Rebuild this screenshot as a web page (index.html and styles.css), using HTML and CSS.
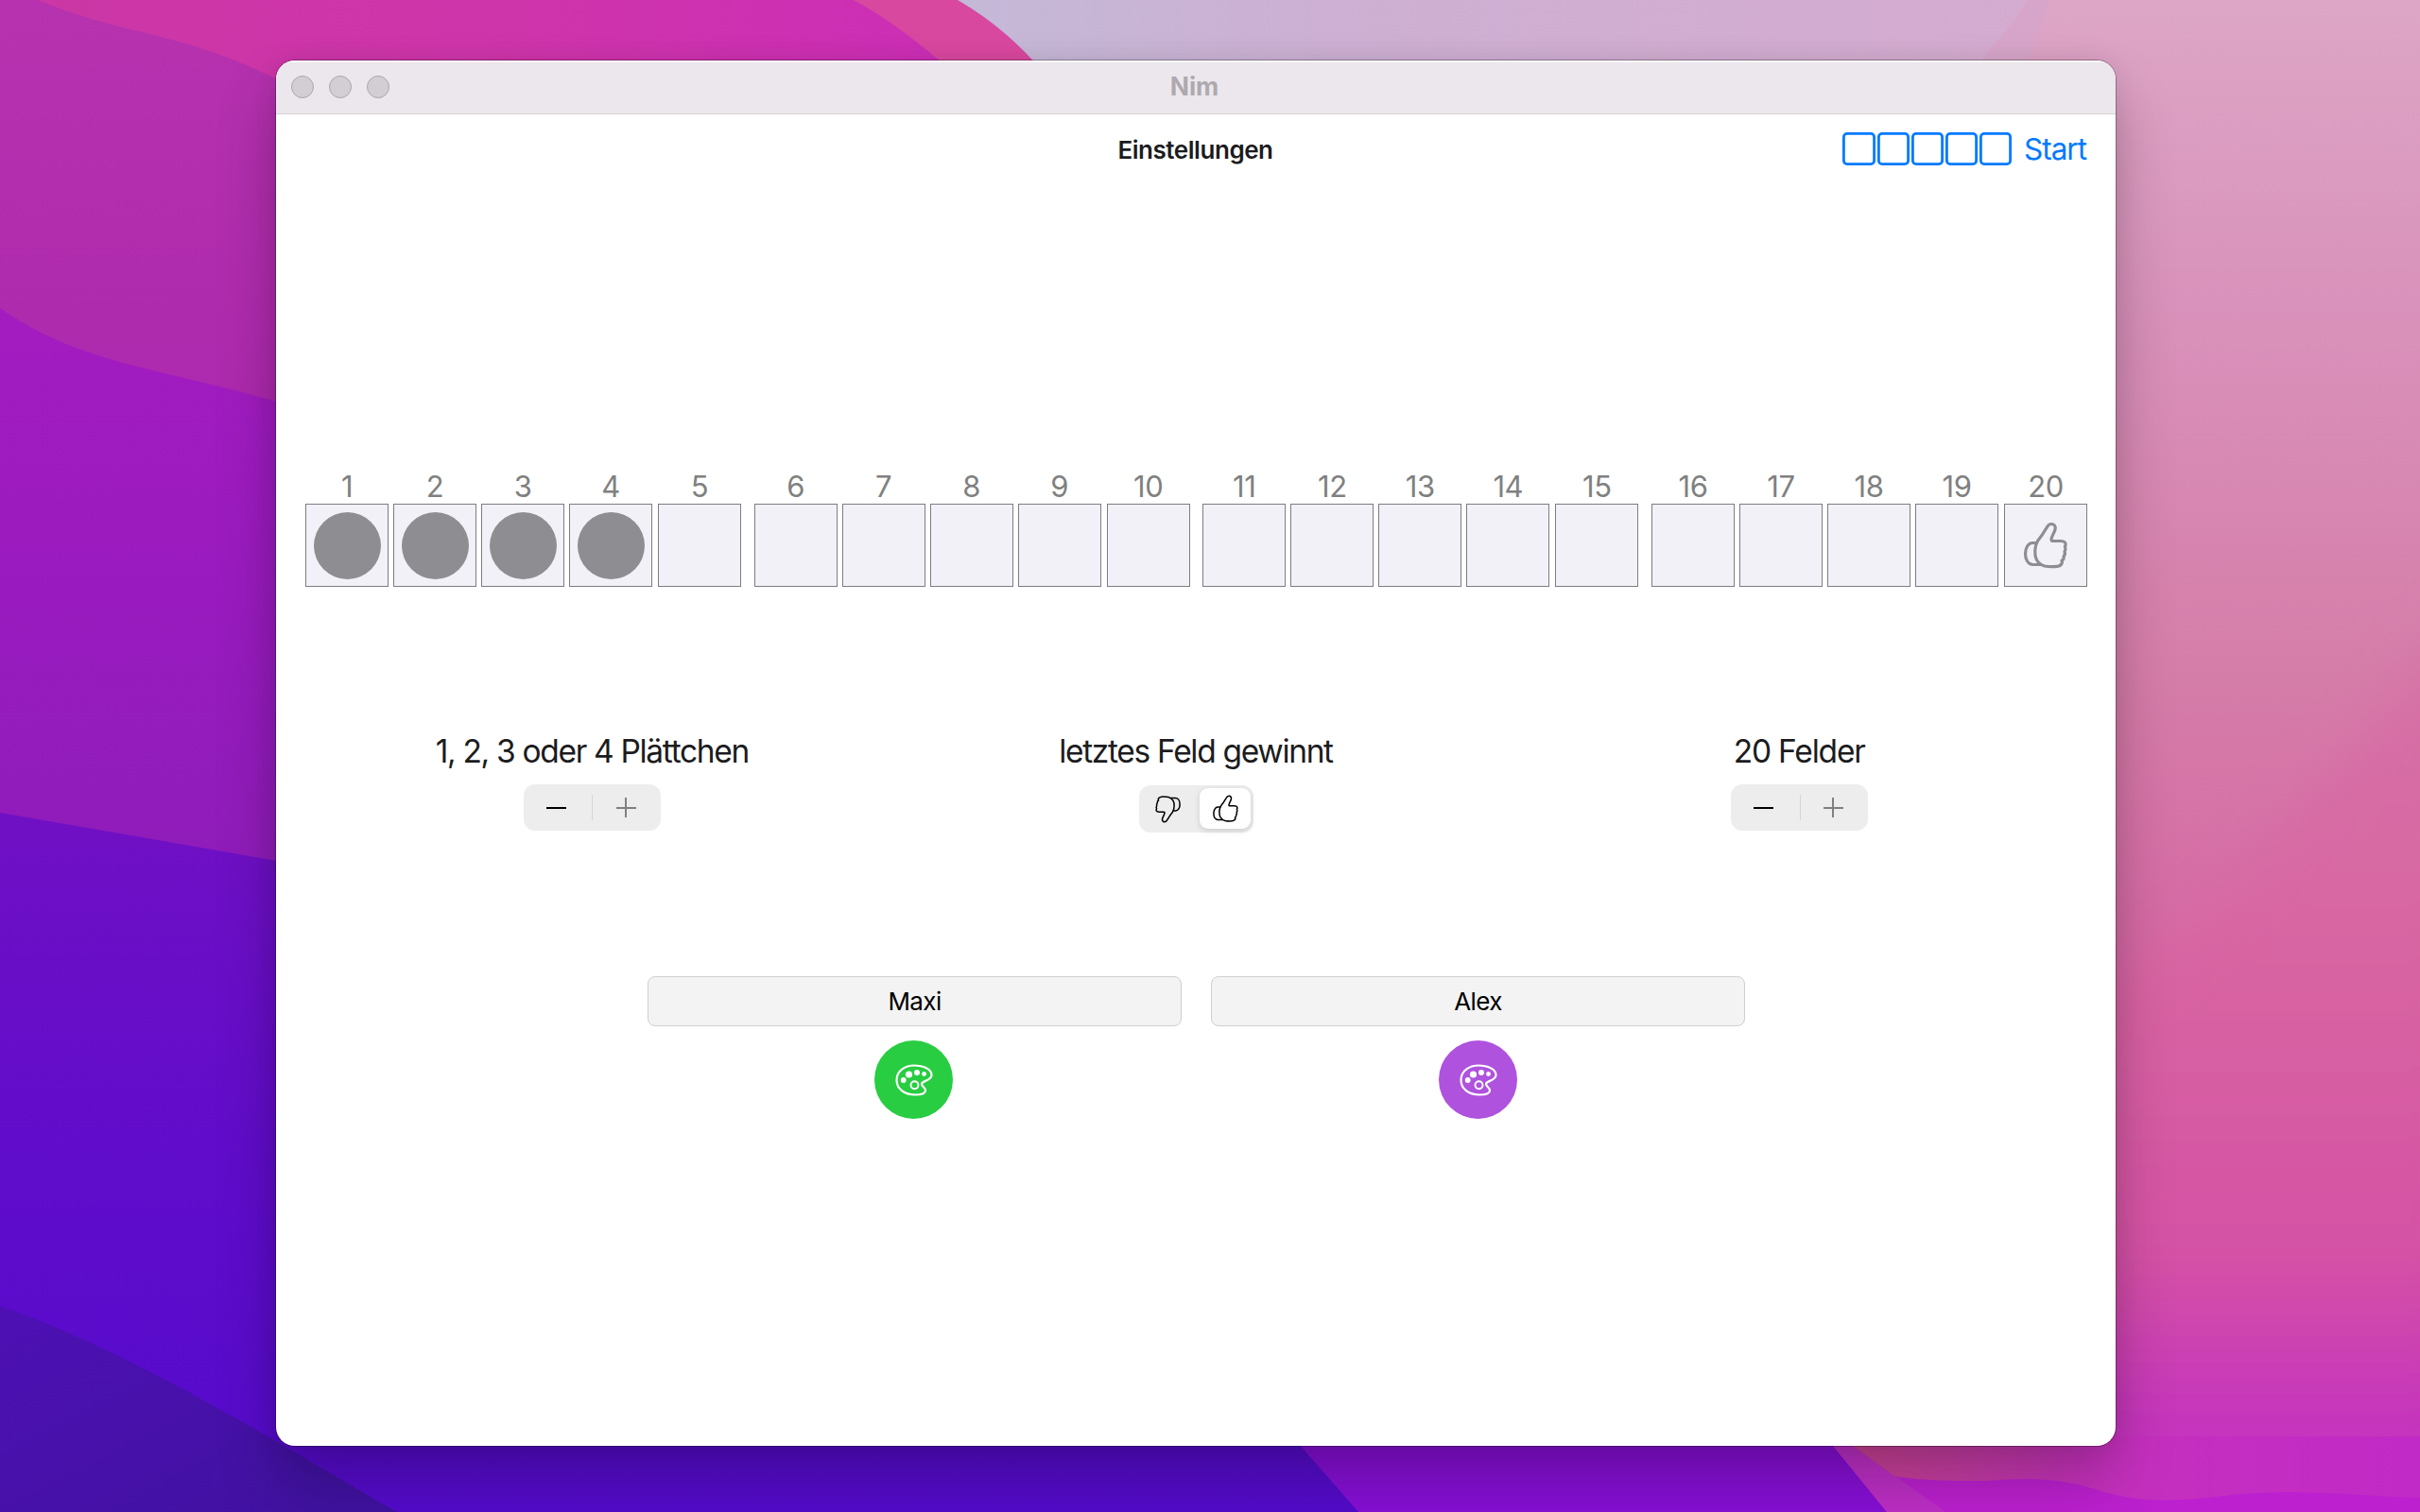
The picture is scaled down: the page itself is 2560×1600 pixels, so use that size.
FILE: index.html
```
<!DOCTYPE html>
<html lang="de">
<head>
<meta charset="utf-8">
<title>Nim</title>
<link rel="stylesheet" href="styles.css">
</head>
<body>
<svg class="wallpaper" viewBox="0 0 2560 1600" preserveAspectRatio="none" aria-hidden="true">
  <defs>
    <linearGradient id="pinkRight" x1="0" y1="0" x2="0" y2="1"><stop offset="0" stop-color="#dda6c6"/><stop offset=".2" stop-color="#d992bb"/><stop offset=".45" stop-color="#d57da9"/><stop offset=".6" stop-color="#d66ca5"/><stop offset=".74" stop-color="#d75fa3"/><stop offset=".85" stop-color="#d04fa4"/><stop offset=".93" stop-color="#c334bd"/><stop offset="1" stop-color="#bb26cc"/></linearGradient>
    <linearGradient id="rose" x1="0" y1="0" x2="0" y2="1"><stop offset="0" stop-color="#d674a6"/><stop offset=".4" stop-color="#d863a2"/><stop offset=".68" stop-color="#d551a5"/><stop offset=".82" stop-color="#c738b9"/><stop offset="1" stop-color="#bc24cb"/></linearGradient>
    <linearGradient id="lilac" x1="0" y1="0" x2="1" y2="0"><stop offset="0" stop-color="#c2bbd9"/><stop offset=".4" stop-color="#cdb0d3"/><stop offset="1" stop-color="#d5abd0"/></linearGradient>
    <linearGradient id="topPink" x1="0" y1="0" x2="1" y2="0"><stop offset="0" stop-color="#cb37a5"/><stop offset=".5" stop-color="#cf35aa"/><stop offset="1" stop-color="#cc2eb6"/></linearGradient>
    <linearGradient id="mauve" x1="0" y1="0" x2="0" y2="1"><stop offset="0" stop-color="#b632ae"/><stop offset="1" stop-color="#ad29ae"/></linearGradient>
    <linearGradient id="purple" x1="0" y1="0" x2="0" y2="1"><stop offset="0" stop-color="#a31cc0"/><stop offset=".5" stop-color="#991bbf"/><stop offset="1" stop-color="#8e1cb9"/></linearGradient>
    <linearGradient id="indigo" x1="0" y1="0" x2="0" y2="1"><stop offset="0" stop-color="#7010c4"/><stop offset=".5" stop-color="#600ccb"/><stop offset="1" stop-color="#540bcb"/></linearGradient>
    <linearGradient id="deep" x1="0" y1="0" x2="1" y2="1"><stop offset="0" stop-color="#4e10b4"/><stop offset="1" stop-color="#3f129f"/></linearGradient>
    <linearGradient id="ember" x1="0" y1="0" x2="1" y2="0"><stop offset="0" stop-color="#cb4392"/><stop offset=".2" stop-color="#c83da4"/><stop offset=".42" stop-color="#c631bd"/><stop offset="1" stop-color="#c12ac6"/></linearGradient>
    <filter id="soft" x="-20%" y="-20%" width="140%" height="140%"><feGaussianBlur stdDeviation="26"/></filter>
  </defs>
  <rect width="2560" height="1600" fill="url(#pinkRight)"/>
  <path d="M2620 640C2480 780 2420 900 2300 1000L2180 1080V1660H2620Z" fill="url(#rose)" filter="url(#soft)"/>
  <path d="M900 0H2168Q2148 50 2130 100H900Z" fill="url(#lilac)"/>
  <path d="M2145 0H2168L2140 80H2080Q2120 40 2145 0Z" fill="#d7a5ca"/>
  <path d="M0 0H1013Q1065 30 1105 78H0Z" fill="#d9489f"/>
  <path d="M0 0H903Q950 25 1010 78V200H0Z" fill="url(#topPink)"/>
  <path d="M0 0H40C130 38 200 35 294 85V440H0Z" fill="url(#mauve)"/>
  <path d="M0 326C90 388 170 388 310 430V940H0Z" fill="url(#purple)"/>
  <path d="M0 860L310 914L1370 1520L1440 1600H0Z" fill="url(#indigo)"/>
  <path d="M0 1382C140 1430 290 1525 420 1600H0Z" fill="url(#deep)"/>
  <path d="M1367 1520L1437 1600H2020L1935 1520Z" fill="#870fd6"/>
  <path d="M1931 1520L1996 1600H2560V1520Z" fill="#bc20cf"/>
  <path d="M1931 1520L1996 1600H2058L1946 1520Z" fill="#be2fc6"/>
  <path d="M1946 1520L2004 1562C2040 1568 2080 1567 2100 1567C2150 1563 2180 1564 2220 1577C2260 1590 2300 1590 2360 1582C2430 1575 2480 1582 2560 1585V1520Z" fill="url(#ember)"/>
</svg>
<main class="window">
  <header class="titlebar">
    <div class="lights"><i></i><i></i><i></i></div>
    <h1 class="window-title">Nim</h1>
  </header>
  <nav class="navbar">
    <h2 class="nav-title">Einstellungen</h2>
    <button class="start"><span class="squares"><i></i><i></i><i></i><i></i><i></i></span><span class="start-label">Start</span></button>
  </nav>
  <section class="board">
    <div class="group">
      <div class="field"><span>1</span><div class="cell"><i class="disc"></i></div></div>
      <div class="field"><span>2</span><div class="cell"><i class="disc"></i></div></div>
      <div class="field"><span>3</span><div class="cell"><i class="disc"></i></div></div>
      <div class="field"><span>4</span><div class="cell"><i class="disc"></i></div></div>
      <div class="field"><span>5</span><div class="cell"></div></div>
    </div>
    <div class="group">
      <div class="field"><span>6</span><div class="cell"></div></div>
      <div class="field"><span>7</span><div class="cell"></div></div>
      <div class="field"><span>8</span><div class="cell"></div></div>
      <div class="field"><span>9</span><div class="cell"></div></div>
      <div class="field"><span>10</span><div class="cell"></div></div>
    </div>
    <div class="group">
      <div class="field"><span>11</span><div class="cell"></div></div>
      <div class="field"><span>12</span><div class="cell"></div></div>
      <div class="field"><span>13</span><div class="cell"></div></div>
      <div class="field"><span>14</span><div class="cell"></div></div>
      <div class="field"><span>15</span><div class="cell"></div></div>
    </div>
    <div class="group">
      <div class="field"><span>16</span><div class="cell"></div></div>
      <div class="field"><span>17</span><div class="cell"></div></div>
      <div class="field"><span>18</span><div class="cell"></div></div>
      <div class="field"><span>19</span><div class="cell"></div></div>
      <div class="field"><span>20</span><div class="cell"><svg class="thumb thumb-large" viewBox="0 0 46 48"><use href="#thumb"/></svg></div></div>
    </div>
  </section>
  <section class="options">
    <div class="option">
      <p class="option-label">1, 2, 3 oder 4 Plättchen</p>
      <div class="stepper"><button><i class="minus"></i></button><button><i class="plus"></i></button></div>
    </div>
    <div class="option">
      <p class="option-label">letztes Feld gewinnt</p>
      <div class="segmented">
        <button><svg class="thumb thumb-down" viewBox="0 0 46 48"><use href="#thumb"/></svg></button>
        <button class="selected"><svg class="thumb" viewBox="0 0 46 48"><use href="#thumb"/></svg></button>
      </div>
    </div>
    <div class="option">
      <p class="option-label count">20 Felder</p>
      <div class="stepper"><button><i class="minus"></i></button><button><i class="plus"></i></button></div>
    </div>
  </section>
  <section class="players">
    <div class="player">
      <div class="name">Maxi</div>
      <button class="color green"><svg class="palette" viewBox="0 0 40 34"><use href="#palette"/></svg></button>
    </div>
    <div class="player">
      <div class="name">Alex</div>
      <button class="color violet"><svg class="palette" viewBox="0 0 40 34"><use href="#palette"/></svg></button>
    </div>
  </section>
</main>
<svg class="symbols" aria-hidden="true">
  <symbol id="thumb" viewBox="0 0 46 48" overflow="visible">
    <path d="M14.5 19.500C17 16.500 20.500 11.500 24 5.500C25.500 2.500 27 1.500 29 1.500C32 1.500 34 4 33 7.500C32 11 29.500 14 29 17.500C28.800 19 29.500 19.500 31 19.500H38.500C41 19.500 43.500 20.500 44 22C44.500 23.500 43.800 24.500 43.300 25.500C44 26.500 44.300 29 43 30.500C43.600 32 43.300 34.500 42 36C42.600 38 41.500 39.500 40 40.200C40.800 42 40 44.500 38 45.500C35 47 26 46.700 22 46C18 45.200 15 42 13.500 39.500C11 35 11 25.500 14.500 19.500Z"/>
    <path d="M13 21.500H9C4.500 21.500 1.500 27 1.500 33C1.500 39 4.500 44.500 9.500 44.500H17.500"/>
  </symbol>
  <symbol id="palette" viewBox="0 0 40 34">
    <path d="M20 1.500C30 1.500 38.500 5.500 38.500 11.500C38.500 18 28 17.500 28 21C28 24 32 24.500 32 28C32 31.500 26 32.500 21 32.500C9.500 32.500 1.500 26 1.500 17C1.500 7.500 10 1.500 20 1.500Z" fill="none" stroke="currentColor" stroke-width="2.200"/>
    <circle cx="20.500" cy="22.200" r="4" fill="none" stroke="currentColor" stroke-width="1.900"/>
    <circle cx="8.700" cy="17" r="2.900" fill="currentColor"/><circle cx="14.500" cy="11" r="3.600" fill="currentColor"/><circle cx="23" cy="9" r="3" fill="currentColor"/><circle cx="30.500" cy="10.500" r="2.400" fill="currentColor"/>
  </symbol>
</svg>
</body>
</html>
```
FILE: styles.css
```
* { box-sizing: border-box; margin: 0; padding: 0; }
html, body { width: 2560px; height: 1600px; overflow: hidden; }
body { display: flex; padding: 64px 0 0 292px; background: #b94fb0; font-family: Inter, "Liberation Sans", sans-serif; color: #1c1c1e; }
button { border: 0; background: none; font: inherit; color: inherit; }
i { display: block; }
.wallpaper { position: absolute; inset: 0; width: 2560px; height: 1600px; z-index: -1; }
.symbols { width: 0; height: 0; }
.window { width: 1946px; height: 1466px; flex: none; display: flex; flex-direction: column; background: #fff; border-radius: 20px; overflow: hidden; box-shadow: 0 0 0 1px rgba(0,0,0,.28), 0 36px 64px rgba(0,0,0,.24), 0 0 24px rgba(0,0,0,.08); }
.titlebar { height: 57px; flex: none; display: grid; grid-template-columns: 200px 1fr 200px; align-items: center; background: #ece7ed; border-top: 2px solid #f8f6f8; border-bottom: 1px solid #d4d1d4; }
.lights { display: flex; gap: 16px; padding: 0 0 2px 16px; }
.lights i { width: 24px; height: 24px; border-radius: 50%; background: #d2ced3; border: 1px solid #aaa6ab; }
.window-title { text-align: center; font-size: 26.500px; line-height: 30px; padding: 0 3px 5px 0; font-weight: 700; color: #aea9af; }
.navbar { height: 75px; flex: none; display: grid; grid-template-columns: 1fr auto 1fr; align-items: center; padding-right: 31px; padding-left: 31px; }
.nav-title { grid-column: 2; font-size: 26px; font-weight: 600; letter-spacing: -.45px; padding: 0 1px 1px 0; }
.start { justify-self: end; display: flex; align-items: center; gap: 12.500px; color: #007aff; font-size: 31.500px; line-height: 38px; padding-bottom: 2px; }
.start-label { letter-spacing: -1px; }
.squares { display: flex; gap: 1.800px; }
.squares i { width: 34.400px; height: 35px; border-radius: 5px; box-shadow: inset 0 0 0 2.800px #007aff; }
.board { display: flex; justify-content: space-between; margin: 297px 30px 0 31px; }
.group { display: flex; width: 461px; gap: 5px; }
.field { width: 88px; flex: none; display: flex; flex-direction: column; }
.field:last-child { margin-left: 1px; }
.field span { height: 40px; line-height: 43px; text-align: center; color: #808080; font-size: 31px; letter-spacing: -.4px; }
.cell { width: 88px; height: 88px; display: flex; align-items: center; justify-content: center; background: #f2f1f7; border: 1px solid #7d7d82; }
.disc { width: 71px; height: 71px; border-radius: 50%; background: #8e8d92; }
.thumb { width: 27px; height: 29px; display: block; fill: none; stroke: #000; stroke-width: 2.600; stroke-linejoin: round; stroke-linecap: round; overflow: visible; }
.thumb-large { width: 46px; height: 48px; stroke: #8e8d92; stroke-width: 3.200; }
.thumb-down { transform: rotate(180deg); }
.options { display: grid; grid-template-columns: repeat(3, 1fr); padding: 0 15px; margin-top: 151px; }
.option { display: flex; flex-direction: column; align-items: center; }
.option-label { height: 58px; line-height: 46px; font-size: 33.500px; letter-spacing: -1.320px; white-space: nowrap; }
.count { letter-spacing: -1.200px; padding-right: 1px; }
.stepper { width: 145px; height: 49px; display: grid; grid-template-columns: 1fr 1fr; background: #ededed; border-radius: 12px; }
.stepper button { display: flex; align-items: center; justify-content: center; padding-right: 3px; }
.stepper button + button { padding-right: 1px; background: linear-gradient(#d5d5d5, #d5d5d5) 0 50% / 1px 27px no-repeat; }
.minus { width: 21px; height: 2px; background: #000; }
.plus { width: 21px; height: 21px; background: linear-gradient(#808080, #808080) center / 21px 2px no-repeat, linear-gradient(#808080, #808080) center / 2px 21px no-repeat; }
.segmented { width: 121px; height: 50px; margin: 1px 0 0 2px; padding: 3px; display: grid; grid-template-columns: 1fr 54px; gap: 6px; background: #ededed; border-radius: 12px; }
.segmented button { display: flex; align-items: center; justify-content: center; border-radius: 9px; }
.segmented .selected { height: 43px; background: #fff; box-shadow: 0 2px 6px rgba(0,0,0,.14); }
.players { display: flex; justify-content: center; gap: 31px; margin: 152px 0 0 1px; }
.player { display: flex; flex-direction: column; align-items: center; gap: 15px; }
.name { width: 565px; height: 53px; line-height: 52px; text-align: center; font-size: 26px; letter-spacing: -.600px; color: #000; background: #f3f3f3; border: 1px solid #cfcfcf; border-radius: 8px; }
.color { width: 83px; height: 83px; border-radius: 50%; display: flex; align-items: center; justify-content: center; color: #fff; }
.green { background: #28cd41; margin-right: 2px; }
.violet { background: #af52de; }
.palette { width: 40px; height: 34px; display: block; }
```
